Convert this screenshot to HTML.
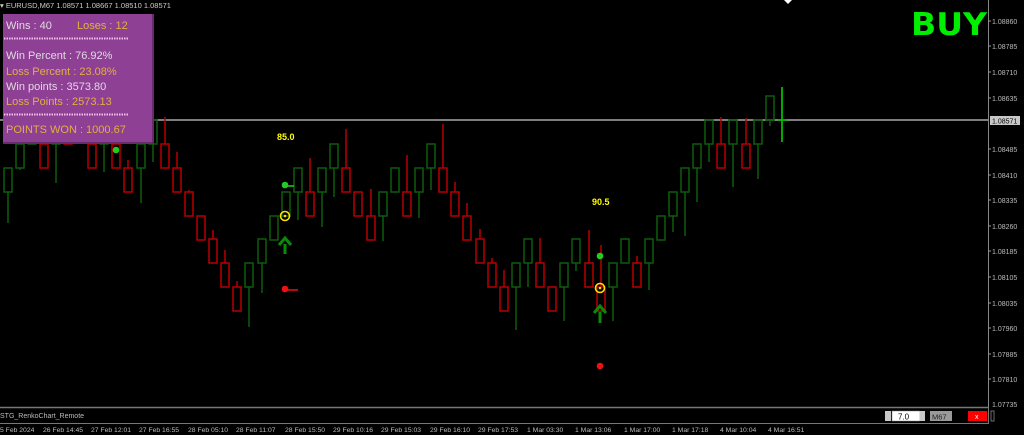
<!DOCTYPE html>
<html><head><meta charset="utf-8"><style>
html,body{margin:0;padding:0;background:#000;width:1024px;height:435px;overflow:hidden}
svg{display:block}
text{font-family:"Liberation Sans",sans-serif}
</style></head><body>
<svg width="1024" height="435" xmlns="http://www.w3.org/2000/svg">
<rect width="1024" height="435" fill="#000"/>
<line x1="0" y1="120" x2="988" y2="120" stroke="#a8a8a8" stroke-width="1.5"/>
<g fill="none" stroke-width="1.5">
<g stroke="#0d5c0d">
<line x1="8" y1="192" x2="8" y2="223"/><rect x="4" y="168" width="8" height="24"/>
<line x1="20" y1="168" x2="20" y2="170"/><rect x="16" y="144" width="8" height="24"/>
<rect x="28" y="120" width="8" height="24"/>
<line x1="56" y1="144" x2="56" y2="183"/><rect x="52" y="120" width="8" height="24"/>
<line x1="104" y1="144" x2="104" y2="172"/><rect x="100" y="120" width="8" height="24"/>
<line x1="141" y1="168" x2="141" y2="203"/><rect x="137" y="144" width="8" height="24"/>
<line x1="153" y1="144" x2="153" y2="162"/><rect x="149" y="120" width="8" height="24"/>
<line x1="249" y1="287" x2="249" y2="327"/><rect x="245" y="263" width="8" height="24"/>
<line x1="262" y1="263" x2="262" y2="293"/><rect x="258" y="239" width="8" height="24"/>
<rect x="270" y="216" width="8" height="24"/>
<rect x="282" y="192" width="8" height="24"/>
<line x1="298" y1="192" x2="298" y2="220"/><rect x="294" y="168" width="8" height="24"/>
<line x1="322" y1="192" x2="322" y2="227"/><rect x="318" y="168" width="8" height="24"/>
<line x1="334" y1="168" x2="334" y2="197"/><rect x="330" y="144" width="8" height="24"/>
<line x1="383" y1="216" x2="383" y2="241"/><rect x="379" y="192" width="8" height="24"/>
<rect x="391" y="168" width="8" height="24"/>
<line x1="419" y1="192" x2="419" y2="218"/><rect x="415" y="168" width="8" height="24"/>
<line x1="431" y1="168" x2="431" y2="190"/><rect x="427" y="144" width="8" height="24"/>
<line x1="516" y1="287" x2="516" y2="330"/><rect x="512" y="263" width="8" height="24"/>
<line x1="528" y1="263" x2="528" y2="287"/><rect x="524" y="239" width="8" height="24"/>
<line x1="564" y1="287" x2="564" y2="321"/><rect x="560" y="263" width="8" height="24"/>
<line x1="576" y1="263" x2="576" y2="271"/><rect x="572" y="239" width="8" height="24"/>
<line x1="613" y1="287" x2="613" y2="321"/><rect x="609" y="263" width="8" height="24"/>
<rect x="621" y="239" width="8" height="24"/>
<line x1="649" y1="263" x2="649" y2="290"/><rect x="645" y="239" width="8" height="24"/>
<rect x="657" y="216" width="8" height="24"/>
<line x1="673" y1="216" x2="673" y2="232"/><rect x="669" y="192" width="8" height="24"/>
<line x1="685" y1="192" x2="685" y2="236"/><rect x="681" y="168" width="8" height="24"/>
<line x1="697" y1="168" x2="697" y2="202"/><rect x="693" y="144" width="8" height="24"/>
<line x1="709" y1="144" x2="709" y2="162"/><rect x="705" y="120" width="8" height="24"/>
<line x1="733" y1="144" x2="733" y2="187"/><rect x="729" y="120" width="8" height="24"/>
<line x1="758" y1="144" x2="758" y2="179"/><rect x="754" y="120" width="8" height="24"/>
<line x1="770" y1="120" x2="770" y2="126"/><rect x="766" y="96" width="8" height="24"/>
</g>
<g stroke="#b80000">
<rect x="40" y="144" width="8" height="24"/>
<rect x="64" y="120" width="8" height="24"/>
<rect x="88" y="144" width="8" height="24"/>
<rect x="112" y="144" width="8" height="24"/>
<line x1="128" y1="160" x2="128" y2="168"/><rect x="124" y="168" width="8" height="24"/>
<line x1="165" y1="117" x2="165" y2="144"/><rect x="161" y="144" width="8" height="24"/>
<line x1="177" y1="152" x2="177" y2="168"/><rect x="173" y="168" width="8" height="24"/>
<line x1="189" y1="190" x2="189" y2="192"/><rect x="185" y="192" width="8" height="24"/>
<rect x="197" y="216" width="8" height="24"/>
<line x1="213" y1="230" x2="213" y2="239"/><rect x="209" y="239" width="8" height="24"/>
<line x1="225" y1="250" x2="225" y2="263"/><rect x="221" y="263" width="8" height="24"/>
<line x1="237" y1="281" x2="237" y2="287"/><rect x="233" y="287" width="8" height="24"/>
<line x1="310" y1="158" x2="310" y2="192"/><rect x="306" y="192" width="8" height="24"/>
<line x1="346" y1="129" x2="346" y2="168"/><rect x="342" y="168" width="8" height="24"/>
<rect x="354" y="192" width="8" height="24"/>
<line x1="371" y1="189" x2="371" y2="216"/><rect x="367" y="216" width="8" height="24"/>
<line x1="407" y1="155" x2="407" y2="192"/><rect x="403" y="192" width="8" height="24"/>
<line x1="443" y1="124" x2="443" y2="168"/><rect x="439" y="168" width="8" height="24"/>
<line x1="455" y1="182" x2="455" y2="192"/><rect x="451" y="192" width="8" height="24"/>
<line x1="467" y1="203" x2="467" y2="216"/><rect x="463" y="216" width="8" height="24"/>
<line x1="480" y1="229" x2="480" y2="239"/><rect x="476" y="239" width="8" height="24"/>
<line x1="492" y1="258" x2="492" y2="263"/><rect x="488" y="263" width="8" height="24"/>
<line x1="504" y1="270" x2="504" y2="287"/><rect x="500" y="287" width="8" height="24"/>
<line x1="540" y1="238" x2="540" y2="263"/><rect x="536" y="263" width="8" height="24"/>
<rect x="548" y="287" width="8" height="24"/>
<line x1="589" y1="230" x2="589" y2="263"/><rect x="585" y="263" width="8" height="24"/>
<line x1="601" y1="245" x2="601" y2="287"/><rect x="597" y="287" width="8" height="24"/>
<line x1="637" y1="256" x2="637" y2="263"/><rect x="633" y="263" width="8" height="24"/>
<line x1="721" y1="117" x2="721" y2="144"/><rect x="717" y="144" width="8" height="24"/>
<line x1="746" y1="118" x2="746" y2="144"/><rect x="742" y="144" width="8" height="24"/>
</g>
</g>
<line x1="782" y1="87" x2="782" y2="142" stroke="#00e000" stroke-width="1.5"/>
<line x1="778" y1="120" x2="787" y2="120" stroke="#00c000" stroke-width="1.5"/>
<polygon points="784,0 792,0 788,4" fill="#fff"/>
<circle cx="116" cy="150" r="3.3" fill="#22cc22"/>
<circle cx="285" cy="185" r="3.3" fill="#22cc22"/><line x1="285" y1="186" x2="294" y2="186" stroke="#22cc22" stroke-width="1.5"/>
<circle cx="285" cy="216" r="4.5" fill="none" stroke="#ffe000" stroke-width="1.6"/><circle cx="285" cy="216" r="1.3" fill="#ffe000"/>
<path d="M285 254 V244 M279 245 L285 238 L291 245" stroke="#0a8a0a" stroke-width="3" fill="none"/>
<circle cx="285" cy="289" r="3.3" fill="#ee1111"/><line x1="285" y1="290" x2="298" y2="290" stroke="#ee1111" stroke-width="1.5"/>
<circle cx="600" cy="256" r="3.3" fill="#22cc22"/>
<circle cx="600" cy="288" r="4.5" fill="none" stroke="#ffe000" stroke-width="1.6"/><circle cx="600" cy="288" r="1.3" fill="#ffe000"/>
<path d="M600 323 V312 M594 313 L600 306 L606 313" stroke="#0a8a0a" stroke-width="3" fill="none"/>
<circle cx="600" cy="366" r="3.3" fill="#ee1111"/>
<text x="277" y="140" font-size="9" font-weight="bold" fill="#ffff00">85.0</text>
<text x="592" y="205" font-size="9" font-weight="bold" fill="#ffff00">90.5</text>
<text x="911" y="35" font-size="31" font-weight="bold" fill="#00ee00" textLength="76" lengthAdjust="spacingAndGlyphs" style="font-family:'DejaVu Sans',sans-serif">BUY</text>
<text x="0" y="8" font-size="7.5" fill="#ccc">▾ EURUSD,M67  1.08571 1.08667 1.08510 1.08571</text>
<rect x="3" y="14" width="151" height="130" fill="#8e4095"/>
<line x1="153" y1="14" x2="153" y2="144" stroke="#5c2560" stroke-width="1.5"/>
<line x1="3" y1="143" x2="154" y2="143" stroke="#5c2560" stroke-width="1.5"/>
<g font-size="11">
<text x="6" y="29" fill="#e0d8e0">Wins  : 40</text>
<text x="77" y="29" fill="#e0b040">Loses : 12</text>
<text x="6" y="59" fill="#e0d8e0">Win Percent  :  76.92%</text>
<text x="6" y="75" fill="#e0b040">Loss Percent :  23.08%</text>
<text x="6" y="90" fill="#e0d8e0">Win points  : 3573.80</text>
<text x="6" y="105" fill="#e0b040">Loss Points : 2573.13</text>
<text x="6" y="133" fill="#e0b040">POINTS WON : 1000.67</text>
</g>
<line x1="4" y1="38.5" x2="128" y2="38.5" stroke="#f0c0e8" stroke-width="2" stroke-dasharray="1.5 1"/>
<line x1="4" y1="114.5" x2="128" y2="114.5" stroke="#f0c0e8" stroke-width="2" stroke-dasharray="1.5 1"/>
<line x1="988.5" y1="0" x2="988.5" y2="407" stroke="#888" stroke-width="1"/>
<g font-size="7" fill="#bbb">
<text x="992" y="24">1.08860</text><text x="992" y="49">1.08785</text><text x="992" y="75">1.08710</text><text x="992" y="101">1.08635</text>
<text x="992" y="152">1.08485</text><text x="992" y="178">1.08410</text><text x="992" y="203">1.08335</text><text x="992" y="229">1.08260</text>
<text x="992" y="254">1.08185</text><text x="992" y="280">1.08105</text><text x="992" y="306">1.08035</text><text x="992" y="331">1.07960</text>
<text x="992" y="357">1.07885</text><text x="992" y="382">1.07810</text><text x="992" y="407">1.07735</text>
</g>
<g stroke="#999"><line x1="988" y1="21" x2="991" y2="21"/><line x1="988" y1="46" x2="991" y2="46"/><line x1="988" y1="72" x2="991" y2="72"/><line x1="988" y1="98" x2="991" y2="98"/><line x1="988" y1="149" x2="991" y2="149"/><line x1="988" y1="175" x2="991" y2="175"/><line x1="988" y1="200" x2="991" y2="200"/><line x1="988" y1="226" x2="991" y2="226"/><line x1="988" y1="251" x2="991" y2="251"/><line x1="988" y1="277" x2="991" y2="277"/><line x1="988" y1="303" x2="991" y2="303"/><line x1="988" y1="328" x2="991" y2="328"/><line x1="988" y1="354" x2="991" y2="354"/><line x1="988" y1="379" x2="991" y2="379"/></g>
<rect x="990" y="116" width="30" height="9" fill="#c8c8c8"/>
<text x="992" y="123.5" font-size="7" fill="#000">1.08571</text>
<line x1="0" y1="407.5" x2="988" y2="407.5" stroke="#777" stroke-width="1.5"/>
<line x1="0" y1="423.5" x2="988" y2="423.5" stroke="#777" stroke-width="1"/>
<line x1="988.5" y1="407" x2="988.5" y2="424" stroke="#777"/>
<text x="0" y="418" font-size="7" fill="#bbb">STG_RenkoChart_Remote</text>
<rect x="885" y="411" width="6" height="10" fill="#c8c8c8"/>
<rect x="892" y="411" width="28" height="10" fill="#fff" stroke="#888" stroke-width="0.5"/>
<text x="898" y="419.5" font-size="8" fill="#000">7.0</text>
<rect x="920" y="411" width="5" height="10" fill="#c8c8c8"/>
<rect x="930" y="411" width="22" height="10" fill="#9a9a9a"/>
<text x="932" y="419.5" font-size="7.5" fill="#222">M67</text>
<rect x="968" y="411" width="19" height="10" fill="#ff0000"/>
<text x="975" y="419" font-size="7" fill="#fff">x</text>
<rect x="991" y="411" width="3" height="10" fill="none" stroke="#888" stroke-width="0.8"/>
<g font-size="6.8" fill="#bbb">
<text x="0" y="432">5 Feb 2024</text><text x="43" y="432">26 Feb 14:45</text><text x="91" y="432">27 Feb 12:01</text><text x="139" y="432">27 Feb 16:55</text>
<text x="188" y="432">28 Feb 05:10</text><text x="236" y="432">28 Feb 11:07</text><text x="285" y="432">28 Feb 15:50</text><text x="333" y="432">29 Feb 10:16</text>
<text x="381" y="432">29 Feb 15:03</text><text x="430" y="432">29 Feb 16:10</text><text x="478" y="432">29 Feb 17:53</text><text x="527" y="432">1 Mar 03:30</text>
<text x="575" y="432">1 Mar 13:06</text><text x="624" y="432">1 Mar 17:00</text><text x="672" y="432">1 Mar 17:18</text><text x="720" y="432">4 Mar 10:04</text><text x="768" y="432">4 Mar 16:51</text>
</g>
</svg>
</body></html>
